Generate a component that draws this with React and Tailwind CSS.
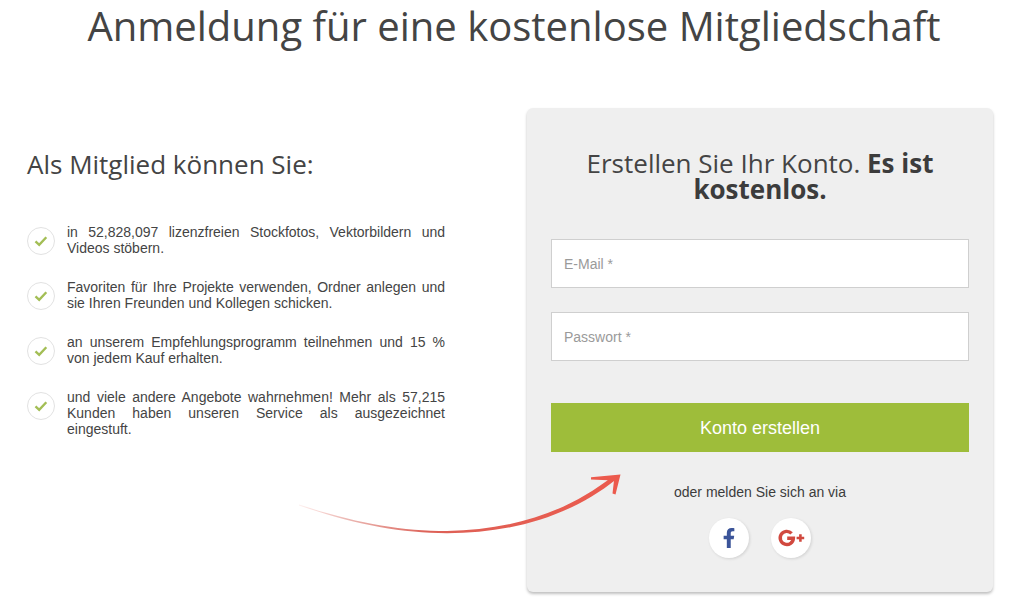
import React, { useState } from 'react';
import { FaFacebookF } from 'react-icons/fa';

const benefits = [
  'in 52,828,097 lizenzfreien Stockfotos, Vektorbildern und Videos stöbern.',
  'Favoriten für Ihre Projekte verwenden, Ordner anlegen und sie Ihren Freunden und Kollegen schicken.',
  'an unserem Empfehlungsprogramm teilnehmen und 15 % von jedem Kauf erhalten.',
  'und viele andere Angebote wahrnehmen! Mehr als 57,215 Kunden haben unseren Service als ausgezeichnet eingestuft.',
];

function CheckBadge() {
  return (
    <span className="flex h-7 w-7 shrink-0 items-center justify-center rounded-full border border-[#e2e2e2] bg-white">
      <svg className="h-4 w-4" viewBox="0 0 16 16" fill="none" aria-hidden="true">
        <path d="M2.5 8.3 L6.2 11.8 L13.3 4.2" stroke="#a3be55" strokeWidth="2.4" />
      </svg>
    </span>
  );
}

function GooglePlusIcon() {
  return (
    <svg className="h-5 w-7" viewBox="0 0 28 20" fill="none" aria-hidden="true">
      <path d="M14.6 5.4 A6.6 6.6 0 1 0 16.4 10.2 H10.2" stroke="#d1493f" strokeWidth="3.4" />
      <path d="M23.4 6.2 V13.8 M19.6 10 H27.2" stroke="#d1493f" strokeWidth="2.6" />
    </svg>
  );
}

function SwooshArrow() {
  return (
    <svg
      className="pointer-events-none absolute top-[362px] -left-[232px] h-[70px] w-[330px]"
      viewBox="0 0 330 70"
      fill="none"
      aria-hidden="true"
    >
      <defs>
        <linearGradient id="swoosh" x1="0" y1="0" x2="330" y2="0" gradientUnits="userSpaceOnUse">
          <stop offset="0" stopColor="#e8574c" stopOpacity="0.05" />
          <stop offset="0.15" stopColor="#d9756c" stopOpacity="0.5" />
          <stop offset="0.4" stopColor="#dd6157" />
          <stop offset="1" stopColor="#ec5a4d" />
        </linearGradient>
      </defs>
      <path
        d="M4 34.5 C60 53 105 61 152 61 C215 60 272 43 318 6 L321 9.5 C274 47 215 63.2 152 63.2 C105 63 60 54.5 4 35.5 Z"
        fill="url(#swoosh)"
      />
      <path d="M296 7.2 L325.5 4.5 L320.5 24.5 L317.5 23.5 L319 10.5 L296 9.5 Z" fill="#ec5a4d" />
    </svg>
  );
}

function SignupCard() {
  const [email, setEmail] = useState('');
  const [password, setPassword] = useState('');

  const inputClass =
    "h-[49px] w-full border border-[#cfcfcf] bg-white px-3 text-sm text-[#444] placeholder:text-[#9a9a9a] focus:outline-none";

  return (
    <section className="relative rounded-md bg-[#efefef] px-6 pt-[42px] pb-[34px] shadow-[0_2px_3px_rgba(0,0,0,0.25)]">
      <h2 className="mb-[37px] px-8 text-center font-['Open_Sans',sans-serif] text-[26px] leading-[26px] font-normal text-[#444]">
        Erstellen Sie Ihr Konto. <strong className="font-bold text-[#3c3c3c]">Es ist kostenlos.</strong>
      </h2>

      <form onSubmit={(e) => e.preventDefault()}>
        <div className="flex flex-col gap-6">
          <input
            type="email"
            aria-label="E-Mail"
            placeholder="E-Mail *"
            className={inputClass}
            value={email}
            onChange={(e) => setEmail(e.target.value)}
          />
          <input
            type="password"
            aria-label="Passwort"
            placeholder="Passwort *"
            className={inputClass}
            value={password}
            onChange={(e) => setPassword(e.target.value)}
          />
        </div>
        <button
          type="submit"
          className="mt-[42px] h-[49px] w-full cursor-pointer bg-[#9ebd3a] text-lg text-white hover:bg-[#8fac33]"
        >
          Konto erstellen
        </button>
      </form>

      <p className="mt-8 text-center text-sm leading-4 text-[#3c3c3c]">oder melden Sie sich an via</p>

      <div className="mt-[18px] flex justify-center gap-[22px]">
        <button
          type="button"
          aria-label="Facebook"
          className="flex h-10 w-10 cursor-pointer items-center justify-center rounded-full bg-white shadow-[1px_1px_3px_rgba(0,0,0,0.12)]"
        >
          <FaFacebookF className="h-5 w-5 text-[#3b5499]" />
        </button>
        <button
          type="button"
          aria-label="Google Plus"
          className="flex h-10 w-10 cursor-pointer items-center justify-center rounded-full bg-white shadow-[1px_1px_3px_rgba(0,0,0,0.12)]"
        >
          <GooglePlusIcon />
        </button>
      </div>

      <SwooshArrow />
    </section>
  );
}

function App() {
  return (
    <div className="bg-white pr-[31px] pl-[27px] font-['Liberation_Sans',Arial,sans-serif]">
      {/* Titel */}
      <h1 className="pl-2 text-center font-['Open_Sans',sans-serif] text-[40px] leading-[52px] font-normal text-[#444]">
        Anmeldung für eine kostenlose Mitgliedschaft
      </h1>

      <main className="mt-14 grid grid-cols-[418fr_466fr] items-start gap-[82px] pb-4">
        {/* Vorteile */}
        <section className="pt-[38px]">
          <h2 className="font-['Open_Sans',sans-serif] text-[26px] leading-9 font-normal text-[#444]">
            Als Mitglied können Sie:
          </h2>
          <ul className="mt-[42px] flex flex-col gap-[23px]">
            {benefits.map((text) => (
              <li key={text} className="flex gap-3">
                <span className="pt-[3px]">
                  <CheckBadge />
                </span>
                <p className="flex-1 text-justify text-sm leading-4 text-[#444]">{text}</p>
              </li>
            ))}
          </ul>
        </section>

        {/* Anmeldeformular */}
        <SignupCard />
      </main>
    </div>
  );
}

export default App;
